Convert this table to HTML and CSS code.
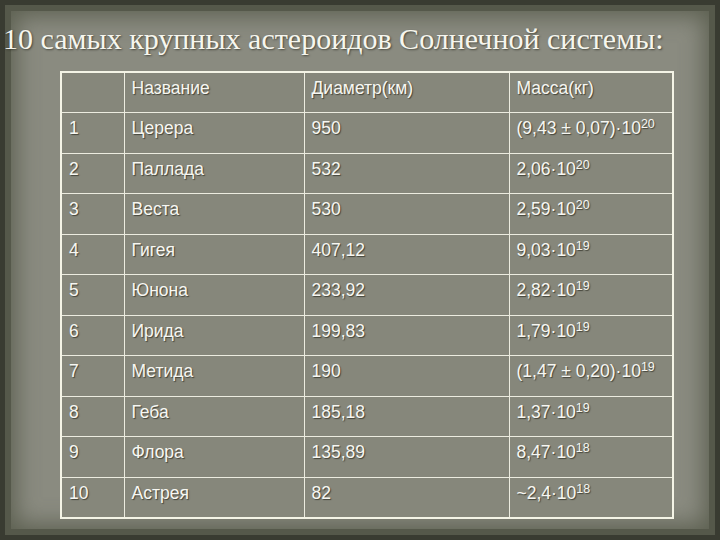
FILE: index.html
```html
<!DOCTYPE html>
<html lang="ru">
<head>
<meta charset="utf-8">
<link rel="stylesheet" href="styles.css">
</head>
<body>
<div class="slide">
  <h1 class="title">10 самых крупных астероидов Солнечной системы:</h1>
  <table class="grid">
    <colgroup>
      <col class="c1"><col class="c2"><col class="c3"><col class="c4">
    </colgroup>
    <tr><td></td><td>Название</td><td>Диаметр(км)</td><td>Масса(кг)</td></tr>
    <tr><td>1</td><td>Церера</td><td>950</td><td>(9,43 ± 0,07)·10<sup>20</sup></td></tr>
    <tr><td>2</td><td>Паллада</td><td>532</td><td>2,06·10<sup>20</sup></td></tr>
    <tr><td>3</td><td>Веста</td><td>530</td><td>2,59·10<sup>20</sup></td></tr>
    <tr><td>4</td><td>Гигея</td><td>407,12</td><td>9,03·10<sup>19</sup></td></tr>
    <tr><td>5</td><td>Юнона</td><td>233,92</td><td>2,82·10<sup>19</sup></td></tr>
    <tr><td>6</td><td>Ирида</td><td>199,83</td><td>1,79·10<sup>19</sup></td></tr>
    <tr><td>7</td><td>Метида</td><td>190</td><td>(1,47 ± 0,20)·10<sup>19</sup></td></tr>
    <tr><td>8</td><td>Геба</td><td>185,18</td><td>1,37·10<sup>19</sup></td></tr>
    <tr><td>9</td><td>Флора</td><td>135,89</td><td>8,47·10<sup>18</sup></td></tr>
    <tr><td>10</td><td>Астрея</td><td>82</td><td>~2,4·10<sup>18</sup></td></tr>
  </table>
</div>
</body>
</html>
```
FILE: styles.css
```css
html, body {
  margin: 0;
  padding: 0;
  background: #3b3d33;
}
.slide {
  width: 720px;
  height: 540px;
  box-sizing: border-box;
  padding-top: 22px;
  background: #8a8b80;
  box-shadow:
    inset 0 0 0 5px #393b31,
    inset 0 0 0 11px #55584a,
    inset 0 0 22px 16px rgba(82, 86, 70, 0.8);
  overflow: hidden;
}
.title {
  margin: 0 0 0 3px;
  font-family: "Liberation Serif", "DejaVu Serif", serif;
  font-weight: normal;
  font-size: 30px;
  line-height: 34px;
  color: #f6f6ee;
  text-shadow: 1px 1px 2px rgba(30, 30, 20, 0.6);
  white-space: nowrap;
}
.grid {
  margin: 15px 0 0 60px;
  border-collapse: collapse;
  border: 2px solid #f4f4e6;
  background: #86877b;
  font-family: "Liberation Sans", Arial, sans-serif;
  font-size: 17.5px;
  color: #f7f7f2;
  text-shadow: 1px 1px 1px rgba(40, 40, 30, 0.7);
}
.c1 { width: 63px; }
.c2 { width: 180px; }
.c3 { width: 205px; }
.c4 { width: 164px; }
.grid td {
  height: 40.5px;
  box-sizing: border-box;
  border: 1px solid #ecece0;
  padding: 6px 7px 0 7px;
  vertical-align: top;
  line-height: 19px;
  white-space: nowrap;
}
.grid sup {
  font-size: 12.5px;
  vertical-align: 6px;
  line-height: 0;
}
```
